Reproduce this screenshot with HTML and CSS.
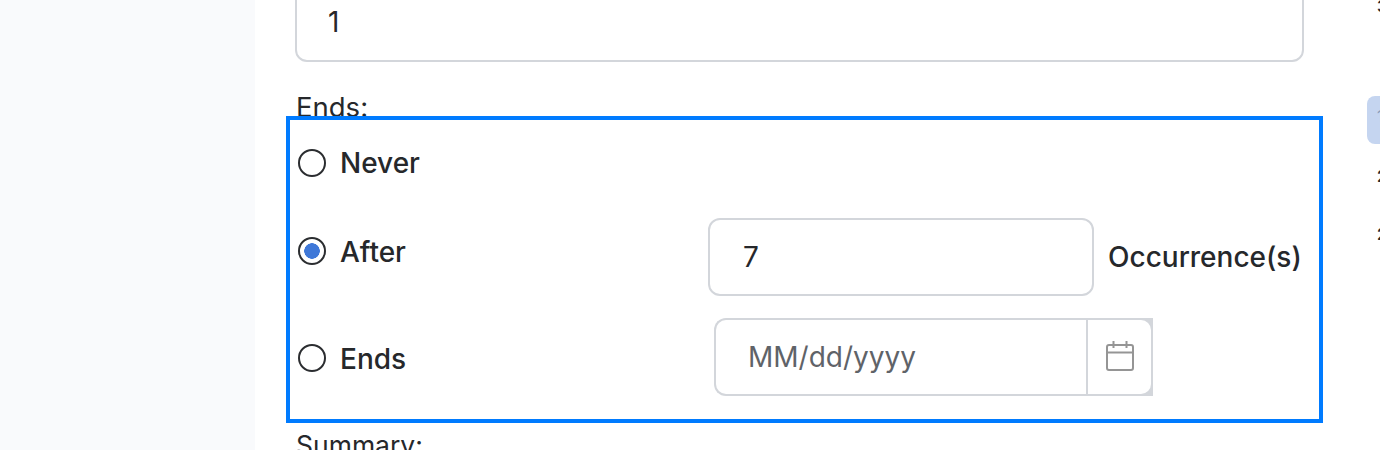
FILE: index.html
```html
<!DOCTYPE html>
<html lang="en">
<head>
<meta charset="utf-8">
<title>Recurrence</title>
<link rel="stylesheet" href="styles.css">
</head>
<body>
<div class="page">
  <aside class="sidebar"></aside>
  <main class="form">
    <div class="input top-input">1</div>
    <div class="label ends-label">Ends:</div>
    <section class="ends-box">
      <div class="row row-never">
        <label class="choice"><span class="radio"></span>Never</label>
      </div>
      <div class="row row-after">
        <label class="choice choice-after"><span class="radio checked"></span><span class="after-text">After</span></label>
        <div class="input count-input">7</div>
        <span class="unit">Occurrence(s)</span>
      </div>
      <div class="row row-ends">
        <label class="choice choice-ends"><span class="radio"></span><span class="choice-text">Ends</span></label>
        <div class="date">
          <span class="date-text">MM/dd/yyyy</span>
          <span class="date-btn">
            <span class="date-btn-inner">
              <svg class="cal" width="28" height="30" viewBox="0 0 28 30" fill="none" stroke="#959595" stroke-width="2">
                <rect x="1" y="4" width="26" height="25" rx="2"/>
                <path d="M1 11.500H27M7.500 0V7M20.500 0V7"/>
              </svg>
            </span>
          </span>
        </div>
      </div>
    </section>
    <div class="label summary-label">Summary:</div>
  </main>
  <nav class="rail">
    <span class="rail-chip"></span>
    <span class="rail-text rail-a">3</span>
    <span class="rail-text rail-m">1</span>
    <span class="rail-text rail-b">2</span>
    <span class="rail-text rail-c">2</span>
  </nav>
</div>
</body>
</html>
```

FILE: styles.css
```css
* { box-sizing: border-box; }
html, body { margin: 0; height: 100%; overflow: hidden; background: #fff; }
body { font-family: Inter, "Liberation Sans", sans-serif; color: #26282b; font-size: 28px; }
.page { display: flex; width: 1380px; height: 450px; overflow: hidden; }
.sidebar { width: 255px; flex: none; background: #f9fafc; }
.form { width: 1112px; flex: none; padding-left: 31px; display: flex; flex-direction: column; }
.input { border: 2px solid #d3d6db; border-radius: 12px; background: #fff; display: flex; align-items: center; flex: none; }
.top-input { width: 1009px; height: 102px; margin: -40px 0 0 9px; padding: 22px 0 0 31px; line-height: 1; }
.label { line-height: 32px; margin-left: 10px; flex: none; }
.ends-label { margin-top: 29px; height: 25px; font-size: 27.500px; }
.ends-box { width: 1037px; height: 307px; flex: none; border: 4px solid #007bff; background: #fff; display: flex; flex-direction: column; padding: 25px 0 0 8px; }
.row { display: flex; align-items: center; flex: none; }
.row-never { height: 36px; }
.row-after { height: 78px; margin-top: 37px; }
.row-ends { height: 78px; margin-top: 22px; }
.choice { display: flex; align-items: center; gap: 14px; font-weight: 500; width: 410px; flex: none; line-height: 30px; }
.choice-after { align-self: flex-start; margin-top: 17px; }
.after-text { margin-top: 2px; }
.choice-ends { margin-top: 4px; }
.choice-ends .radio { margin-top: -2px; }
.radio { width: 28px; height: 28px; border: 2px solid #2b2d30; border-radius: 50%; background: #fff; flex: none; display: block; }
.radio.checked { background: radial-gradient(circle, #3f78d8 0 7.500px, #fff 8px); }
.count-input { width: 386px; height: 78px; padding-left: 33px; }
.unit { margin-left: 14px; font-weight: 500; }
.date { height: 78px; margin-left: 6px; display: flex; }
.date-text { width: 372px; border: 2px solid #d3d6db; border-right: 0; border-radius: 12px 0 0 12px; padding-left: 32px; display: flex; align-items: center; color: #5f6368; }
.date-btn { width: 67px; background: #d3d6db; padding: 2px; display: flex; }
.date-btn-inner { flex: 1; background: #fff; border-radius: 0 10px 10px 0; display: flex; align-items: center; justify-content: center; }
.cal { margin: 0 0 3px 0; }
.summary-label { margin-top: 6px; font-size: 26.500px; }
.rail { width: 13px; flex: none; position: relative; overflow: hidden; font-size: 16px; font-weight: 600; line-height: 16px; }
.rail-chip { position: absolute; left: 0; top: 96px; width: 40px; height: 48px; border-radius: 8px; background: #c5d5f0; }
.rail-text { position: absolute; left: 10px; white-space: nowrap; }
.rail-a { top: -2px; }
.rail-m { top: 108px; color: #8a9bb8; font-weight: 400; }
.rail-b { top: 168px; }
.rail-c { top: 226px; }
```
